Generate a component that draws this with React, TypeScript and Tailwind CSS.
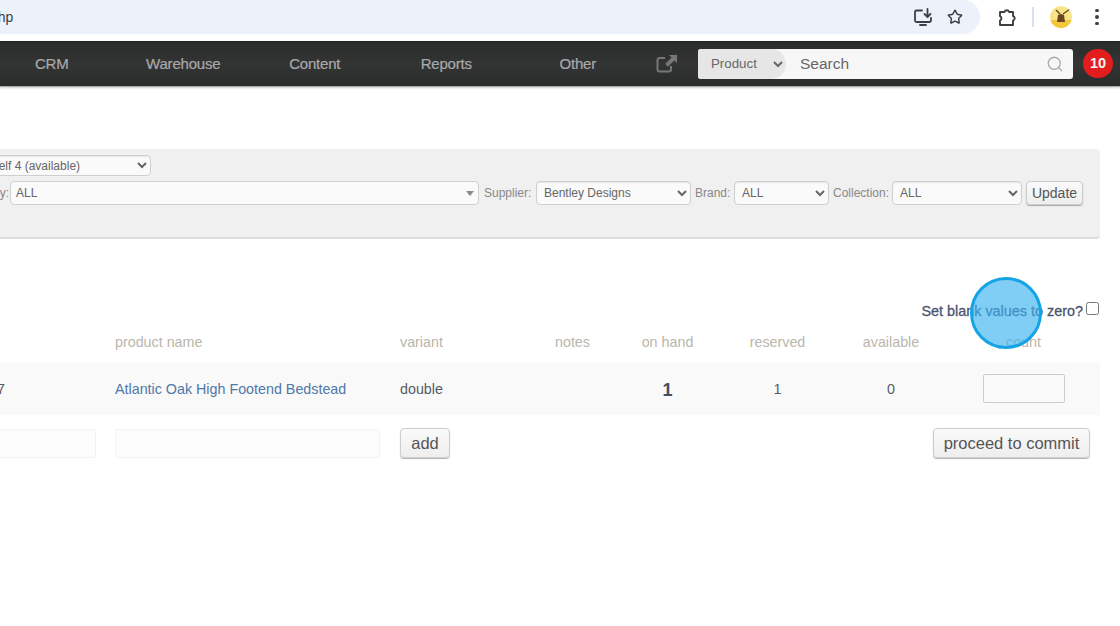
import { Star, Search } from "lucide-react";

const sel = "h-full rounded-[4px] border border-[#cfcfcf] bg-[#fafafa] text-[12px] text-[#666] pl-[3px] shadow-[inset_0_1px_1px_rgba(0,0,0,0.08)]";
const cols = "grid grid-cols-[115px_285px_130px_85px_105px_115px_112px_153px]";
const btn = "rounded-[4px] border border-[#ccc] bg-gradient-to-b from-[#fafafa] to-[#eee] text-[#555] shadow-[0_1px_1px_rgba(0,0,0,0.3)]";

function Avatar() {
  return (
    <svg width="22" height="22" viewBox="0 0 22 22" className="rounded-full">
      <circle cx="11" cy="11" r="11" fill="#f8e488" />
      <path d="M0 14h22v8H0z" fill="#f4c63a" />
      <path d="M8 9l3-1 3 1 1 7H7z" fill="#6b4423" />
      <path d="M13 8l7-5" stroke="#6b4423" strokeWidth="1.2" />
      <path d="M6 4l4 4" stroke="#6b4423" strokeWidth="1.5" />
    </svg>
  );
}

function InstallIcon() {
  return (
    <svg width="20" height="20" viewBox="0 0 20 20" fill="none" stroke="#3c4043" strokeWidth="1.8" strokeLinecap="round" strokeLinejoin="round">
      <path d="M9 3.5H3.5A1.5 1.5 0 0 0 2 5v8.5A1.5 1.5 0 0 0 3.5 15h13a1.5 1.5 0 0 0 1.5-1.5V11" />
      <path d="M7 18h6" />
      <path d="M14.5 2v7.5M11.5 7l3 3 3-3" />
    </svg>
  );
}

function PuzzleIcon() {
  return (
    <svg width="20" height="20" viewBox="0 0 20 20" fill="none" stroke="#3c4043" strokeWidth="1.9" strokeLinejoin="round">
      <path d="M3 5h4.5a2.4 2.4 0 0 1 4.6 0H16v4a2.4 2.4 0 0 1 0 4.6V18H3v-4.4a2.4 2.4 0 0 0 0-4.4z" />
    </svg>
  );
}

function ExternalIcon() {
  return (
    <svg width="21" height="18" viewBox="0 0 21 18" fill="none">
      <path d="M9 3H3.5A2 2 0 0 0 1.5 5v9.5a2 2 0 0 0 2 2H13a2 2 0 0 0 2-2V11" stroke="#777" strokeWidth="2" />
      <path d="M13 0h8v8l-2.6-2.6-6.4 6.4-2.8-2.8 6.4-6.4z" fill="#777" />
    </svg>
  );
}

export default function App() {
  return (
    <div className="relative h-[626px] w-[1120px] overflow-hidden bg-white font-['Liberation_Sans',Arial,sans-serif]">
      {/* browser bar */}
      <div className="flex h-[41px] items-start">
        <div className="flex h-[34px] w-[980px] items-center rounded-r-[17px] bg-[#edf1fa]">
          <span className="ml-[-14px] flex-1 text-[14px] text-[#3c4043]">.php</span>
          <InstallIcon />
          <Star size={16} strokeWidth={2.2} color="#3c4043" className="ml-[14px] mr-[17px]" />
        </div>
        <div className="flex h-[34px] flex-1 items-center">
          <div className="ml-[17px]"><PuzzleIcon /></div>
          <div className="ml-[15px] h-[20px] w-[2px] bg-[#d6e0f0]" />
          <div className="ml-[16px]"><Avatar /></div>
          <div className="ml-[23px] flex flex-col gap-[3px]">
            <i className="block h-[3.5px] w-[3.5px] rounded-full bg-[#3c4043]" />
            <i className="block h-[3.5px] w-[3.5px] rounded-full bg-[#3c4043]" />
            <i className="block h-[3.5px] w-[3.5px] rounded-full bg-[#3c4043]" />
          </div>
        </div>
      </div>

      {/* nav */}
      <div className="flex h-[46px] items-center border-t border-t-[#222] border-b border-b-[#aaa] bg-gradient-to-b from-[#2a2b2b] via-[#333535] to-[#2a2b2b] shadow-[0_1px_2px_rgba(0,0,0,0.2)]">
        <div className="ml-[-14px] flex text-[15px] tracking-[-0.2px] text-[#a9a9a9] [-webkit-text-stroke:0.2px_#a9a9a9]">
          {["CRM", "Warehouse", "Content", "Reports", "Other"].map((t) => (
            <span key={t} className="w-[131.5px] text-center">{t}</span>
          ))}
        </div>
        <div className="ml-[12px] mb-[1px]"><ExternalIcon /></div>
        <div className="ml-[21.5px] mb-[1px] flex h-[30px] w-[375px] overflow-hidden rounded-[3px] bg-[#f7f7f7]">
          <div className="h-full w-[88px] rounded-r-[15px] bg-[#e6e6e6]">
            <select className="h-full w-full bg-transparent pl-[9px] text-[13.3px] text-[#666]">
              <option>Product</option>
            </select>
          </div>
          <span className="ml-[14px] flex-1 self-center text-[15.5px] text-[#666]">Search</span>
          <Search size={18} strokeWidth={1.7} color="#aaa" className="mr-[9px] self-center" />
        </div>
        <div className="ml-[10px] mb-[1px] flex h-[29px] w-[30px] items-center justify-center rounded-full bg-[#e21d1d] text-[14.5px] font-bold text-[#f4f4f4]">10</div>
      </div>

      {/* filter panel */}
      <div className="mt-[62px] flex h-[90px] w-[1100px] flex-col rounded-r-[4px] border-b-2 border-b-[#dcdcdc] bg-[#f0f0f0] pt-[6px]">
        <div className="flex h-[21px]">
          <select className={`${sel} ml-[-24px] w-[175px]`}><option>Shelf 4 (available)</option></select>
        </div>
        <div className="mt-[5px] flex h-[24px] items-center text-[12px] text-[#888]">
          <span className="ml-[-43px] w-[50px]">Category:</span>
          <div className="ml-[3px] flex h-full w-[469px] items-center justify-between rounded-[4px] border border-[#cfcfcf] bg-[#fafafa] pl-[5px] pr-[4px] text-[#666]">
            <span>ALL</span>
            <span className="h-0 w-0 border-x-[4px] border-t-[5px] border-x-transparent border-t-[#888]" />
          </div>
          <span className="ml-[5px] w-[52px]">Supplier:</span>
          <select className={`${sel} w-[155px]`}><option>Bentley Designs</option></select>
          <span className="ml-[4px] w-[39px]">Brand:</span>
          <select className={`${sel} w-[95px]`}><option>ALL</option></select>
          <span className="ml-[4px] w-[59px]">Collection:</span>
          <select className={`${sel} w-[130px]`}><option>ALL</option></select>
          <button className={`${btn} ml-[4px] h-full w-[57px] text-[14px]`}>Update</button>
        </div>
      </div>

      {/* set blank */}
      <div className="mt-[63px] flex h-[20px] w-[1099px] items-center justify-end">
        <span className="text-[14.4px] font-medium text-[#4a5570] [-webkit-text-stroke:0.3px_#4a5570]">Set blank values to zero?</span>
        <input type="checkbox" className="mb-[7px] ml-[3px] h-[13px] w-[13px]" />
      </div>

      {/* table */}
      <div className="mt-[10px] w-[1100px] text-[14.3px]">
        <div className={`${cols} h-[22px] items-center text-[#b9b6ab]`}>
          <span />
          <span>product name</span>
          <span>variant</span>
          <span className="text-center">notes</span>
          <span className="text-center">on hand</span>
          <span className="text-center">reserved</span>
          <span className="text-center">available</span>
          <span className="text-center">count</span>
        </div>
        <div className={`${cols} mt-[9px] h-[52px] items-center bg-[#f9f9f9] pt-[2px] text-[#555c66]`}>
          <span className="ml-[-3px]">7</span>
          <span className="text-[#4f77a8]">Atlantic Oak High Footend Bedstead</span>
          <span>double</span>
          <span />
          <span className="text-center text-[18px] font-bold text-[#444e5e]">1</span>
          <span className="text-center">1</span>
          <span className="text-center">0</span>
          <span className="flex justify-center">
            <input className="mb-[4px] h-[29px] w-[82px] rounded-[2px] border border-[#ccc] bg-[#fafafa]" />
          </span>
        </div>
        <div className="mt-[13px] flex h-[31px] items-center">
          <input className="ml-[-4px] h-[29px] w-[100px] rounded-[2px] border border-[#f3f3f3] bg-[#fcfcfc]" />
          <input className="ml-[19px] h-[29px] w-[265px] rounded-[2px] border border-[#f3f3f3] bg-[#fcfcfc]" />
          <button className={`${btn} ml-[20px] h-[30px] w-[50px] self-start text-[16.5px]`}>add</button>
          <button className={`${btn} ml-auto mr-[10px] h-[30px] w-[157px] self-start text-[16.5px]`}>proceed to commit</button>
        </div>
      </div>

      {/* click marker */}
      <div className="absolute left-[970px] top-[277px] h-[72px] w-[72px] rounded-full border-[3px] border-[#14a3e4] bg-[#3cb4f0]/65" />
    </div>
  );
}
